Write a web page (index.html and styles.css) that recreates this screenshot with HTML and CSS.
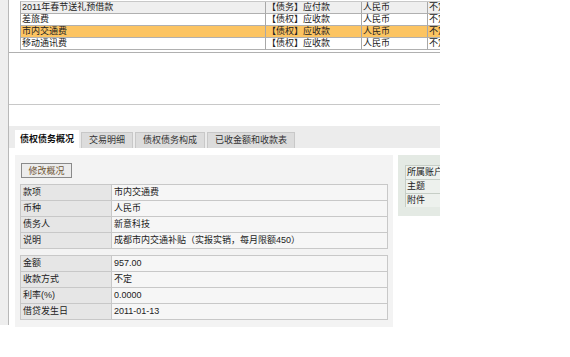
FILE: index.html
```html
<!DOCTYPE html>
<html lang="zh-CN">
<head>
  <meta charset="UTF-8" />
  <meta name="viewport" content="width=device-width, initial-scale=1" />
  <title>债权债务概况</title>
  <link rel="stylesheet" href="styles.css">
</head>
<body>

  <div class="page">
    <div class="side"></div>

    <div class="main">
      <!-- 款项列表 -->
      <div class="list">
        <div class="list-grid">
          <div class="row first">
            <div class="cell">2011年春节送礼预借款</div>
            <div class="cell">【债务】应付款</div>
            <div class="cell">人民币</div>
            <div class="cell">不定</div>
          </div>
          <div class="row">
            <div class="cell">差旅费</div>
            <div class="cell">【债权】应收款</div>
            <div class="cell">人民币</div>
            <div class="cell">不定</div>
          </div>
          <div class="row selected">
            <div class="cell">市内交通费</div>
            <div class="cell">【债权】应收款</div>
            <div class="cell">人民币</div>
            <div class="cell">不定</div>
          </div>
          <div class="row">
            <div class="cell">移动通讯费</div>
            <div class="cell">【债权】应收款</div>
            <div class="cell">人民币</div>
            <div class="cell">不定</div>
          </div>
        </div>
      </div>
      <div class="list-foot"></div>

      <!-- 标签页 -->
      <div class="tabs">
        <div class="tab active">债权债务概况</div>
        <div class="tab">交易明细</div>
        <div class="tab">债权债务构成</div>
        <div class="tab">已收金额和收款表</div>
      </div>

      <div class="content">
        <div class="detail">
          <button class="edit-btn">修改概况</button>

          <div class="info">
            <div class="label">款项</div><div class="value">市内交通费</div>
            <div class="label">币种</div><div class="value">人民币</div>
            <div class="label">债务人</div><div class="value">新意科技</div>
            <div class="label">说明</div><div class="value">成都市内交通补贴（实报实销，每月限额450）</div>
          </div>

          <div class="info">
            <div class="label">金额</div><div class="value">957.00</div>
            <div class="label">收款方式</div><div class="value">不定</div>
            <div class="label">利率(%)</div><div class="value">0.0000</div>
            <div class="label">借贷发生日</div><div class="value">2011-01-13</div>
          </div>
        </div>

        <div class="extra">
          <div class="extra-row">所属账户</div>
          <div class="extra-row">主题</div>
          <div class="extra-row">附件</div>
        </div>
      </div>
    </div>
  </div>

</body>
</html>
```

FILE: styles.css
```css
body {
  margin: 0;
  background-color: white;
  font-family: "Liberation Sans", "Noto Sans CJK SC", sans-serif;
  font-size: 9px;
  color: #222;
}

.page {
  display: flex;
  width: 440px;
}

.side {
  width: 8px;
  height: 325px;
  background-color: #eeeeee;
  border-right: 1px solid #b8b8b8;
}

.main {
  width: 431px;
  overflow: hidden;
}

/* 列表 */
.list {
  height: 51px;
  padding-top: 1px;
  border-bottom: 1px solid #b0b0b0;
}

.list-grid {
  margin-left: 11px;
  width: 480px;
  border-left: 1px solid #a8a8a8;
  border-top: 1px solid #c8c8c8;
}

.row {
  display: grid;
  grid-template-columns: 245px 96px 66px 72px;
  height: 12px;
}

.row.first {
  background-color: #efefef;
}

.row.selected {
  background-color: #fcc462;
}

.cell {
  border-right: 1px solid #a8a8a8;
  border-bottom: 1px solid #b0b0b0;
  padding-left: 1px;
  line-height: 11px;
  white-space: nowrap;
  overflow: hidden;
}

.list-foot {
  height: 51px;
  border-bottom: 1px solid #c8c8c8;
}

/* 标签页 */
.tabs {
  display: flex;
  align-items: flex-end;
  gap: 2px;
  margin-top: 21px;
  height: 22px;
  padding-left: 6px;
  background-color: #ececec;
}

.tab {
  height: 15px;
  line-height: 15px;
  padding: 0 7px;
  background-color: #dcdcdc;
  border: 1px solid #c8c8c8;
  border-bottom: none;
  color: #333;
}

.tab.active {
  height: 17px;
  line-height: 17px;
  padding: 0 4px;
  background-color: white;
  border-color: white;
  font-weight: bold;
  color: #111;
}

/* 内容 */
.content {
  display: flex;
  align-items: flex-start;
  gap: 5px;
  padding: 7px 0 0 6px;
}

.detail {
  width: 368px;
  padding: 8px 5px 7px 5px;
  background-color: #f3f3f3;
}

.edit-btn {
  display: block;
  width: 51px;
  height: 15px;
  margin: 0 0 6px 1px;
  padding: 0;
  background-color: #ececec;
  border: 1px solid #8a8a8a;
  font-family: inherit;
  font-size: 9px;
  color: #6e5535;
}

.info {
  display: grid;
  grid-template-columns: 91px 276px;
  border-top: 1px solid #c8c8c8;
  border-left: 1px solid #c8c8c8;
  margin-bottom: 6px;
}

.info:last-child {
  margin-bottom: 0;
}

.label, .value {
  height: 15px;
  line-height: 15px;
  padding-left: 2px;
  border-right: 1px solid #c8c8c8;
  border-bottom: 1px solid #c8c8c8;
  white-space: nowrap;
}

.label {
  background-color: #e6e6e6;
}

.value {
  background-color: #f6f6f6;
}

.extra {
  width: 60px;
  padding: 10px 0 9px 7px;
  background-color: #e4eae4;
}

.extra-row {
  height: 13px;
  line-height: 13px;
  padding-left: 1px;
  background-color: #edf1ed;
  border-top: 1px solid #c6cec6;
  border-left: 1px solid #c6cec6;
  white-space: nowrap;
}
```
